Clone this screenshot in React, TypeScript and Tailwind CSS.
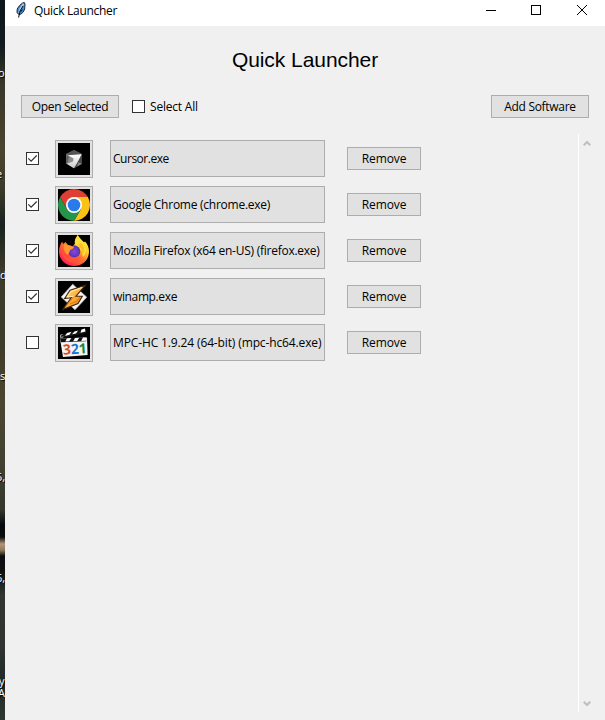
import React from 'react';

const desktopLabels = [
  { text: 'o', place: 'top-[65px] left-[-2px]' },
  { text: 'e', place: 'top-[166px] left-[-4px]' },
  { text: 'd', place: 'top-[267px] left-0' },
  { text: 's', place: 'top-[368px] left-0' },
  { text: '5,', place: 'top-[469px] left-[-4px]' },
  { text: '6,', place: 'top-[570px] left-[-4px]' },
  { text: 'y', place: 'top-[673px] left-[-1px] h-3 !leading-4' },
  { text: 'A', place: 'top-[687px] left-[-2px] h-3 !leading-3' },
];

function DesktopEdge() {
  return (
    <div className="relative w-[5px] shrink-0 overflow-hidden bg-[linear-gradient(to_bottom,#0c171b_0,#101c1e_45px,#3a3829_85px,#49442f_150px,#3b3a29_190px,#19231f_225px,#3c3a29_270px,#3d3b2a_345px,#4c4630_400px,#414132_465px,#34372c_510px,#06090b_525px,#0c0d0e_537px,#b39678_544px,#92795f_550px,#0b0d10_556px,#101211_572px,#303631_595px,#303531_645px,#20282a_682px,#303730_720px)] text-[11px] leading-4 text-white">
      {desktopLabels.map((l) => (
        <span key={l.place} className={`absolute ${l.place} [text-shadow:1px_1px_1px_#000]`}>
          {l.text}
        </span>
      ))}
    </div>
  );
}

function Feather() {
  return (
    <svg width="10" height="16" viewBox="0 0 10 16" className="shrink-0">
      <path d="M8.3 .4 9 2 8.7 7 7.3 10 5 12 3 12.7 1 10.5 1.2 7 3.5 3.5 6.5 1Z" fill="#4c8bd0" stroke="#111c2b" strokeWidth=".9" />
      <path d="M7.6 1.8 4 7 3 11" stroke="#a9cff2" strokeWidth="1.5" fill="none" />
      <path d="M7 4 4 9 2.6 15.5M6.5 7.5 4.5 10" stroke="#0a0a0a" strokeWidth="1" fill="none" />
    </svg>
  );
}

function CursorIcon() {
  return (
    <svg width="32" height="32" viewBox="0 0 32 32">
      <defs>
        <linearGradient id="face" x1="0" y1="0" x2="0" y2="1">
          <stop offset="0" stopColor="#ffffff" />
          <stop offset="1" stopColor="#c9c9c9" />
        </linearGradient>
      </defs>
      <rect width="32" height="32" fill="#000" />
      <path d="M16 7 23.8 11v9.8L16 25.3 8.2 20.8V11Z" fill="#6b6b6b" />
      <path d="M16 7 23.8 11 16 13 8.2 11Z" fill="#555" />
      <path d="M8.2 11 16 14.5 15 19 8.2 20.8Z" fill="#8c8c8c" />
      <path d="M8.2 11 11 14 9.5 20 8.2 20.8Z" fill="#5e5e5e" />
      <path d="M10 12.3 23.5 11.3 20.5 19 16 25.3 8.8 20.8 15 18.5 15.5 15.5Z" fill="url(#face)" />
      <path d="M23.8 11.3v9.5L16 25.3 19 20.3Z" fill="#484848" />
      <path d="M20.5 19.5 23.8 20.8 19 23.5Z" fill="#8b8b8b" />
    </svg>
  );
}

function ChromeIcon() {
  return (
    <svg width="32" height="32" viewBox="0 0 32 32">
      <rect width="32" height="32" fill="#000" />
      <path d="M16 16 2.15 8A16 16 0 0 1 29.85 8Z" fill="#df3e32" />
      <path d="M16 8H29.85A16 16 0 0 1 16 32L22.93 20Z" fill="#fbc116" />
      <path d="M2.15 8A16 16 0 0 0 16 32L22.93 20 16 16 9.07 20Z" fill="#23964a" />
      <path d="M2.15 8 9.07 20 16 8Z" fill="#df3e32" />
      <circle cx="16" cy="16" r="8" fill="#fff" />
      <circle cx="16" cy="16" r="6.3" fill="#2a7ae9" />
    </svg>
  );
}

function FirefoxIcon() {
  return (
    <svg width="32" height="32" viewBox="0 0 32 32">
      <defs>
        <linearGradient id="fire" x1=".85" y1=".1" x2=".2" y2=".9">
          <stop offset="0" stopColor="#fff044" />
          <stop offset=".3" stopColor="#ffc62b" />
          <stop offset=".55" stopColor="#ff752e" />
          <stop offset="1" stopColor="#ff234f" />
        </linearGradient>
        <radialGradient id="globe">
          <stop offset="0" stopColor="#8a45e6" />
          <stop offset="1" stopColor="#5635a4" />
        </radialGradient>
      </defs>
      <rect width="32" height="32" fill="#000" />
      <path d="M19.5 0C21 3 23 4 24.5 6L26 7.3 27 6.5C29.5 9 31 12.5 31 16.5 31 25 24.5 31 16 31 7.5 31 1 24.5 1 16.5 1 12.5 2.5 9 4.2 6.5L5 9 7.6 7 10 10 15 11.2 18 7Z" fill="url(#fire)" />
      <path d="M20 0C20.5 3 25 5 26 9 29 13 28 19 25 22 24 15 21 12 17 9 16 5 18 2 20 0Z" fill="#ffdf36" />
      <circle cx="16.3" cy="16.5" r="6" fill="url(#globe)" />
      <path d="M6.5 9C10 10 12 11 16 11.7 16 14 13 14 11.7 15.5 12 17 10.5 19 9.3 20 6.5 17 4.5 13 6.5 9Z" fill="#ff972c" />
      <path d="M4 14C6 20 9 23.5 14 23.5 18 24 21 22.5 23 20 21 27 14 30 8 25 4.5 22 3.2 18 4 14Z" fill="#ff563c" opacity=".75" />
      <path d="M20 10C23.5 13 25 17 24 21 27 17 27 12 23 8Z" fill="#ffbd2a" />
    </svg>
  );
}

function WinampIcon() {
  return (
    <svg width="32" height="32" viewBox="0 0 32 32">
      <defs>
        <linearGradient id="bolt" x1="0" y1="0" x2="1" y2="1">
          <stop offset="0" stopColor="#fff0a5" />
          <stop offset=".5" stopColor="#ffad37" />
          <stop offset="1" stopColor="#d66b0c" />
        </linearGradient>
      </defs>
      <rect width="32" height="32" fill="#000" />
      <path d="M14.7 3.2 28.8 16.2 17 28.8 3.2 16Z" fill="#f5f5f5" stroke="#b8b8b8" strokeWidth=".7" />
      <path d="M27.5 4.2 12 9.3 6.6 17.5 13.2 16.8 4.8 28.5 20 22.5 24.3 15.2 18 15.2Z" fill="url(#bolt)" stroke="#42240b" strokeWidth="1.1" />
      <path d="M24 6.5 13 10.5 9.2 16 16 15.2" stroke="#fff2ac" fill="none" strokeWidth="1" />
      <path d="m8 25 8-9.5M12 23l7-3 3-4" stroke="#d77812" fill="none" />
    </svg>
  );
}

function MpcIcon() {
  return (
    <svg width="32" height="32" viewBox="0 0 32 32">
      <rect width="32" height="32" fill="#000" />
      <path d="m2 8 25-6 1 4L3 11Z" fill="#171717" />
      <path d="m9 6 4.5-1.2-2 3L7 9ZM16.5 4.5 20 3.5l-2 3-4 .8ZM23.5 2.5l3.5-.9.5 3-5 1.2Z" fill="#fff" />
      <path d="m2.5 8 2-.5M2.5 10.5l3-.7M2.5 8v2.5" stroke="#aaa" fill="none" />
      <path d="m2 11.5 27-1 .6 17.5L5 30Z" fill="#f5f5f5" />
      <path d="m2 11.5 26-1 .2 3.8L3 15.2Z" fill="#101010" />
      <path d="m9 11.2 4.3-.2-2 3.3-4 .2ZM17 10.9l4.2-.2-2 3.4-4 .2ZM25 10.6l3-.1.2 3.2-5 .2Z" fill="#fff" />
      <g fontFamily="Open Sans, sans-serif" fontWeight="700" fontSize="14" transform="rotate(-4 16 22)">
        <text x="4.8" y="27" fill="#dd4d20">3</text>
        <text x="12.8" y="27" fill="#2374c9">2</text>
        <text x="20.7" y="27" fill="#168836">1</text>
      </g>
    </svg>
  );
}

const software = [
  { name: 'Cursor.exe', track: 'tracking-[-0.48px]', checked: true, Icon: CursorIcon },
  { name: 'Google Chrome (chrome.exe)', track: 'tracking-[-0.25px]', checked: true, Icon: ChromeIcon },
  { name: 'Mozilla Firefox (x64 en-US) (firefox.exe)', track: 'tracking-[-0.25px]', checked: true, Icon: FirefoxIcon },
  { name: 'winamp.exe', track: 'tracking-[-0.37px]', checked: true, Icon: WinampIcon },
  { name: 'MPC-HC 1.9.24 (64-bit) (mpc-hc64.exe)', track: 'tracking-[-0.13px]', checked: false, Icon: MpcIcon },
];

function Checkbox({ checked = false }: { checked?: boolean }) {
  return (
    <span role="checkbox" aria-checked={checked} className="block size-[13px] shrink-0 border border-[#333] bg-white">
      {checked && (
        <svg width="11" height="11" viewBox="0 0 11 11" className="block">
          <path d="M1.3 5.3 4.1 8.1 9.7 2.5" stroke="#333" strokeWidth="1.2" fill="none" />
        </svg>
      )}
    </span>
  );
}

function Button({ children, className }: { children: React.ReactNode; className: string }) {
  return (
    <button className={`flex h-[23px] shrink-0 items-center justify-center border border-[#adadad] bg-[#e1e1e1] whitespace-nowrap ${className}`}>
      {children}
    </button>
  );
}

function Chevron({ down = false }: { down?: boolean }) {
  return (
    <svg width="8" height="7" viewBox="0 0 8 7" className={down ? 'rotate-180' : ''}>
      <path d="M.7 5.3 4 2 7.3 5.3" stroke="#bfbfbf" strokeWidth="2.1" fill="none" />
    </svg>
  );
}

export default function App() {
  return (
    <div className="flex h-[720px] w-[605px] overflow-hidden bg-[#f0f0f0] font-['Open_Sans','Noto_Sans',sans-serif] text-[12px] leading-4 text-black">
      <DesktopEdge />
      <main className="flex min-w-0 flex-1 flex-col">
        <header className="flex h-[26px] shrink-0 bg-white pl-[11px]">
          <div className="pt-[2px]"><Feather /></div>
          <span className="ml-2 pt-[3px] whitespace-nowrap tracking-[-0.3px]">Quick Launcher</span>
          <svg width="104" height="12" viewBox="0 0 104 12" className="mt-[4px] mr-[16px] ml-auto" fill="none" stroke="#000" shapeRendering="crispEdges">
            <path d="M1 6.5h10M46.5 1.5h9v9h-9Z" />
            <path d="m92 1 10 10m0-10L92 11" shapeRendering="auto" />
          </svg>
        </header>

        <h1 className="mt-[21px] h-[26px] shrink-0 text-center font-['Liberation_Sans',Arial,sans-serif] text-[21px] leading-[26px] font-normal tracking-[-0.06px]">Quick Launcher</h1>

        <div className="mt-[22px] flex h-[23px] shrink-0 items-center pr-4 pl-4">
          <Button className="w-[98px] tracking-[-0.36px]">Open Selected</Button>
          <label className="ml-[13px] flex items-center gap-[5px]">
            <Checkbox />
            <span className="whitespace-nowrap tracking-[-0.2px]">Select All</span>
          </label>
          <Button className="ml-auto w-[98px] tracking-[-0.3px]">Add Software</Button>
        </div>

        <section className="mt-4 mb-2 flex min-h-0 flex-1">
          <div className="flex flex-1 flex-col gap-2 pt-[6px] pl-[21px]">
            {software.map(({ name, track, checked, Icon }) => (
              <div key={name} className="flex h-[38px] items-start">
                <div className="mt-3"><Checkbox checked={checked} /></div>
                <button className="ml-4 flex size-[38px] items-center justify-center border border-[#adadad] bg-[#e1e1e1]">
                  <Icon />
                </button>
                <button className={`ml-[17px] flex h-[37px] w-[215px] items-center border border-[#adadad] bg-[#e1e1e1] pl-[2px] whitespace-nowrap ${track}`}>{name}</button>
                <Button className="mt-[7px] ml-[22px] w-[74px] tracking-[-0.1px]">Remove</Button>
              </div>
            ))}
          </div>
          <div className="flex w-[27px] flex-col justify-between border-l border-white pt-[6px] pb-[5px] pl-1">
            <Chevron />
            <Chevron down />
          </div>
        </section>
      </main>
    </div>
  );
}
